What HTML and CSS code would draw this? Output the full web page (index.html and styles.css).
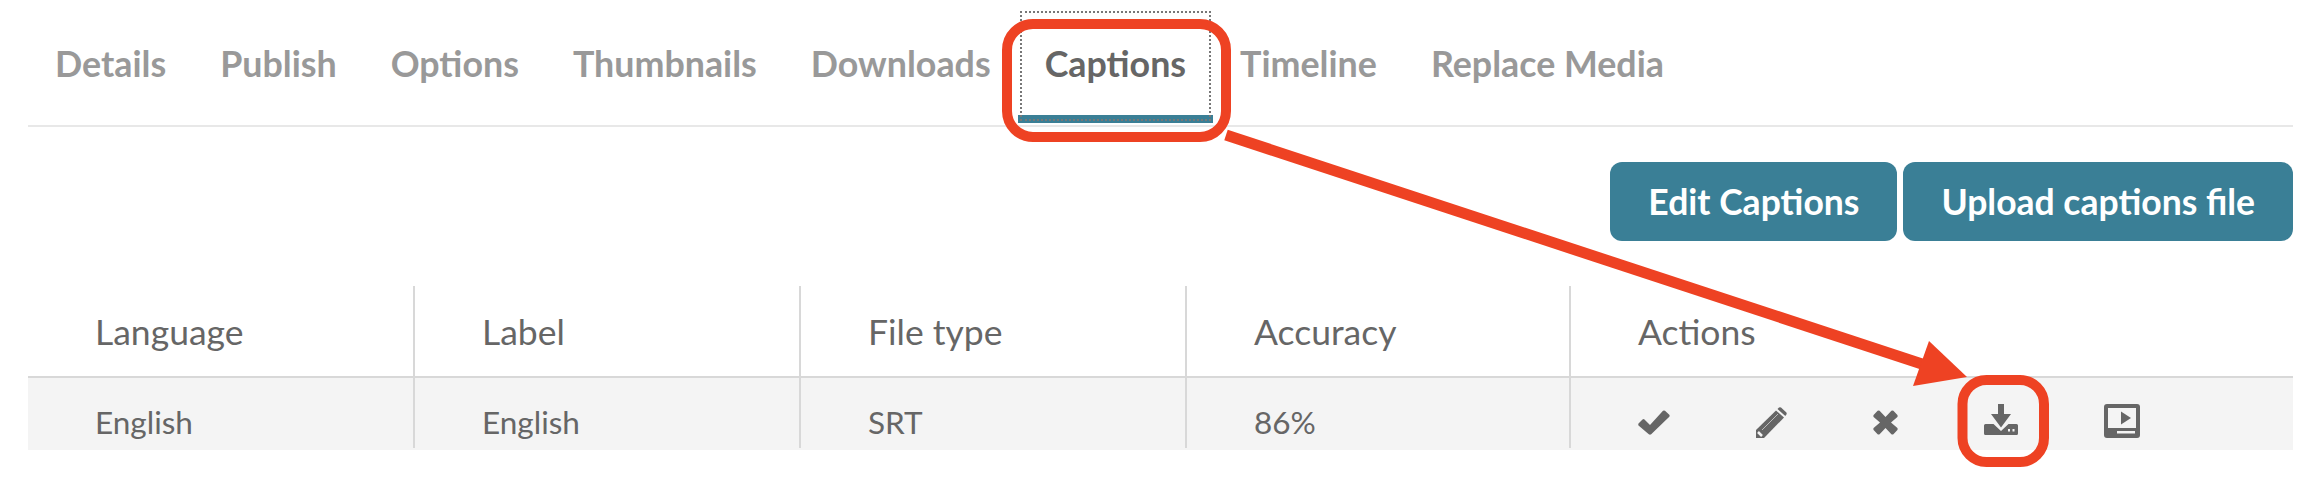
FILE: index.html
```html
<!DOCTYPE html>
<html lang="en">
<head>
    <meta charset="UTF-8">
    <title>Captions</title>
    <link rel="stylesheet" href="styles.css">
</head>
<body>
    <div class="page">
        <ul class="tabs">
            <li class="tab">Details</li>
            <li class="tab">Publish</li>
            <li class="tab">Options</li>
            <li class="tab">Thumbnails</li>
            <li class="tab">Downloads</li>
            <li class="tab active">Captions</li>
            <li class="tab">Timeline</li>
            <li class="tab">Replace Media</li>
        </ul>

        <div class="buttons">
            <button class="btn">Edit Captions</button>
            <button class="btn">Upload captions file</button>
        </div>

        <div class="row head">
            <div class="cell">Language</div>
            <div class="cell">Label</div>
            <div class="cell">File type</div>
            <div class="cell">Accuracy</div>
            <div class="cell last">Actions</div>
        </div>
        <div class="row body">
            <div class="cell">English</div>
            <div class="cell">English</div>
            <div class="cell">SRT</div>
            <div class="cell">86%</div>
            <div class="cell last actions">
                <svg width="32" height="25" viewBox="0 0 32 25"><path class="ico" d="M0.5 13.5 L4.5 9.5 Q5.5 8.5 6.5 9.5 L12 15 L25 0.8 Q26 0 27 0.8 L31.3 4.8 Q32 5.8 31.3 6.8 L13.2 24.3 Q12 25.2 10.8 24.3 L0.5 15.5 Q0 14.5 0.5 13.5 Z"/></svg>
                <svg class="pencil" width="31" height="31" viewBox="0 0 31 31">
                    <path class="ico" d="M0 31 V23 L20 3.5 L28 10.5 L8 31 Z"/>
                    <path class="ico" d="M21.5 2 L23 0.6 Q24 0 25 0.6 L30.4 5.5 Q31 6.5 30.4 7.5 L29.3 9 Z"/>
                    <path class="cut" d="M6 23 L22 7"/>
                    <path class="cut thick" d="M2 25 L6 29"/>
                </svg>
                <svg width="25" height="25" viewBox="0 0 25 25"><path class="ico" d="M0.6 5 L4.6 0.8 Q5.6 0 6.6 0.8 L12.5 7 L18.4 0.8 Q19.4 0 20.4 0.8 L24.4 5 Q25 6 24.4 7 L18 12.5 L24.4 18 Q25 19 24.4 20 L20.4 24.2 Q19.4 25 18.4 24.2 L12.5 18 L6.6 24.2 Q5.6 25 4.6 24.2 L0.6 20 Q0 19 0.6 18 L7 12.5 L0.6 7 Q0 6 0.6 5 Z"/></svg>
                <svg class="raise" width="34" height="31" viewBox="0 0 34 31">
                    <path class="ico" d="M1.5 20 H9.5 L17 27 L24.5 20 H32.5 Q34 20 34 21.5 V29.5 Q34 31 32.5 31 H1.5 Q0 31 0 29.5 V21.5 Q0 20 1.5 20 Z"/>
                    <path class="ico" d="M14 0 H20 V10 H27 L17 23.5 L7 10 H14 Z"/>
                    <rect class="dot" x="24" y="25" width="2" height="2.5"/>
                    <rect class="dot" x="28.5" y="25" width="2" height="2.5"/>
                </svg>
                <svg class="raise" width="36" height="34" viewBox="0 0 36 34">
                    <rect class="ico" width="36" height="34" rx="3"/>
                    <rect class="dot" x="4" y="4" width="28" height="20"/>
                    <path class="ico" d="M17 7.5 L27 14 L17 20.5 Z"/>
                    <rect class="dot" x="13" y="27" width="18" height="2.5"/>
                </svg>
            </div>
        </div>

        <svg class="notes" width="2322" height="488" viewBox="0 0 2322 488">
            <rect class="note-box" x="1007" y="24" width="219" height="113" rx="26"/>
            <rect class="note-box" x="1962.5" y="380" width="81.5" height="82" rx="24"/>
            <path class="note-line" d="M1226 135 L1925 365"/>
            <path class="note-head" d="M1967 377 L1929 341 L1913 386 Z"/>
        </svg>
    </div>
</body>
</html>
```

FILE: styles.css
```css
body {
    margin: 0;
    background: #fff;
    font-family: Lato, "Open Sans", sans-serif;
    color: #666;
}
.page {
    position: relative;
    width: 2322px;
    height: 488px;
    overflow: hidden;
    padding: 9px 29px 0 28px;
    box-sizing: border-box;
}
.tabs {
    display: flex;
    list-style: none;
    margin: 0;
    padding: 0 0 2px;
    border-bottom: 2px solid #e8e8e8;
}
.tab {
    height: 114px;
    box-sizing: border-box;
    padding: 33px 27px 0;
    font-size: 35.8px;
    line-height: 44px;
    font-weight: 700;
    color: #999;
}
.tab.active {
    color: #666;
    border-bottom: 8px solid #3a7f96;
    outline: 2px dotted #777;
    outline-offset: -4px;
}
.buttons {
    display: flex;
    justify-content: flex-end;
    gap: 6px;
    margin-top: 35px;
}
.btn {
    height: 79px;
    padding: 0 38px;
    border: 0;
    border-radius: 12px;
    background: #3a7f96;
    color: #fff;
    font-family: inherit;
    font-size: 35.5px;
    font-weight: 700;
}
.row {
    display: grid;
    grid-template-columns: 387px 386px 386px 384px 1fr;
}
.head {
    margin-top: 45px;
    height: 90px;
    border-bottom: 2px solid #d8d8d8;
    box-sizing: content-box;
}
.body {
    background: #f4f4f4;
    padding-bottom: 2px;
}
.cell {
    padding-left: 67px;
    border-right: 2px solid #d8d8d8;
    box-sizing: border-box;
}
.cell.last {
    border-right: 0;
}
.head .cell {
    font-size: 35.5px;
    line-height: 91px;
}
.body .cell {
    height: 70px;
    padding-top: 8px;
    font-size: 31.5px;
    line-height: 72px;
}
.body .actions {
    display: flex;
    gap: 86px;
    padding-top: 32px;
    align-items: flex-start;
}
.pencil {
    margin-top: -3px;
}
.raise {
    margin-top: -6px;
}
.ico {
    fill: #666;
}
.dot {
    fill: #f4f4f4;
}
.cut {
    fill: none;
    stroke: #f4f4f4;
    stroke-width: 1;
    opacity: 0.6;
}
.cut.thick {
    stroke-width: 2.5;
    opacity: 1;
}
.notes {
    position: absolute;
    top: 0;
    left: 0;
}
.note-box {
    fill: none;
    stroke: #ee4223;
    stroke-width: 10;
}
.note-line {
    fill: none;
    stroke: #ee4223;
    stroke-width: 11;
}
.note-head {
    fill: #ee4223;
}
```
